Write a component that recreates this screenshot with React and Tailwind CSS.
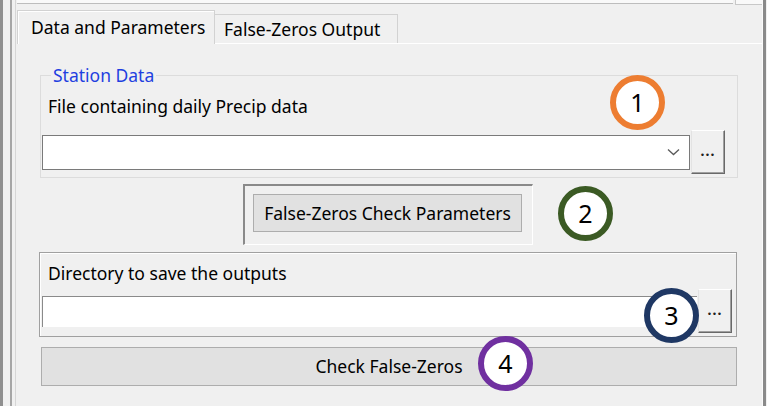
import React from "react";

// "..." browse button, classic raised 3D look
const DotsButton = () => (
  <div className="w-[34px] h-[44px] shrink-0 flex items-center justify-center bg-[#f0f0f0] border border-t-white border-l-[#e3e3e3] border-r-[#696969] border-b-[#696969] shadow-[inset_-1px_-1px_0_#a0a0a0]">
    <span className="text-[14px] leading-none font-bold text-[#202020] -mt-[2px] tracking-[1px]">...</span>
  </div>
);

// numbered callout rings drawn over the form
const Badge = ({ n, className }) => (
  <div className={"absolute w-[55px] h-[55px] rounded-full border-[6px] bg-white flex items-center justify-center " + className}>
    <span className="text-[25px] leading-none text-black">{n}</span>
  </div>
);

const App = () => {
  return (
    <div className="relative w-[767px] h-[406px] overflow-hidden flex bg-[#f0f0f0] text-black font-['Noto_Sans',sans-serif] text-[17.5px] leading-[22px]">
      {/* left window edges */}
      <div className="w-[17px] shrink-0 flex">
        <div className="w-[3px] bg-[#8f8f8f]"></div>
        <div className="w-[7px]"></div>
        <div className="w-[2px] bg-[#a6a6a6]"></div>
        <div className="w-[3px]"></div>
        <div className="w-[1px] bg-[#d6d6d6]"></div>
      </div>

      <div className="w-[745px] shrink-0 flex flex-col">
        {/* bottom of control above */}
        <div className="h-[5px] flex">
          <div className="w-[716px] h-[4px] bg-[#f9f9f9] border-b border-[#bdbdbd]"></div>
          <div className="w-[2px]"></div>
          <div className="flex-1 h-[5px] bg-[#f9f9f9] border-b border-l border-[#c8c8c8]"></div>
        </div>

        {/* tabs */}
        <div className="h-[38px] flex items-end">
          <div className="relative z-10 -mb-px w-[198px] h-[34px] pl-[13px] flex items-center bg-[#f0f0f0] border-t border-l border-r border-[#d2d2d2] shadow-[inset_1px_1px_0_#fff]">
            <span className="-mt-[2px]">Data and Parameters</span>
          </div>
          <div className="w-[183px] h-[29px] pl-[9px] flex items-center bg-[#f0f0f0] border-t border-r border-[#d2d2d2]">
            <span>False-Zeros Output</span>
          </div>
        </div>

        {/* tab page */}
        <div className="flex-1 flex flex-col border-t border-white">
          {/* Station Data group */}
          <div className="relative mt-[31px] ml-[23px] w-[698px] h-[103px] border border-[#dcdcdc] flex flex-col">
            <span className="absolute -top-[12px] left-[10px] px-[2px] bg-[#f0f0f0] text-[#1f3fe0]">Station Data</span>
            <span className="mt-[19px] ml-[7px]">File containing daily Precip data</span>
            <div className="mt-[13px] flex items-center">
              <div className="ml-[1px] w-[648px] h-[35px] bg-white border border-[#7a7a7a] flex items-center justify-end pr-[9px]">
                <svg width="13" height="8" viewBox="0 0 13 8">
                  <path d="M1 1.5 L6.5 6.5 L12 1.5" fill="none" stroke="#5a5a5a" strokeWidth="1.3" />
                </svg>
              </div>
              <div className="ml-[1px]">
                <DotsButton />
              </div>
            </div>
          </div>

          {/* parameters button in sunken frame */}
          <div className="mt-[6px] ml-[226px] w-[290px] h-[61px] border-t-2 border-l-2 border-t-[#8a8a8a] border-l-[#8a8a8a] border-b border-r border-b-white border-r-white pt-[8px] pl-[8px]">
            <div className="w-[269px] h-[38px] bg-[#e1e1e1] border border-[#adadad] flex items-center justify-center">
              <span className="-mt-[1px]">False-Zeros Check Parameters</span>
            </div>
          </div>

          {/* output directory */}
          <div className="mt-[7px] ml-[22px] w-[698px] h-[85px] border border-[#a0a0a0] shadow-[inset_1px_1px_0_#fff] flex flex-col">
            <span className="mt-[9px] ml-[8px]">Directory to save the outputs</span>
            <div className="mt-[5px] flex items-center">
              <div className="ml-[2px] w-[655px] h-[31px] bg-white border-t border-l border-[#8a8a8a]"></div>
              <div className="ml-[1px]">
                <DotsButton />
              </div>
            </div>
          </div>

          <div className="mt-[10px] ml-[24px] w-[696px] h-[39px] bg-[#e1e1e1] border border-[#adadad] flex items-center justify-center">
            <span className="-mt-[1px]">Check False-Zeros</span>
          </div>
        </div>
      </div>

      {/* right window edge */}
      <div className="w-[5px] shrink-0 flex">
        <div className="w-[1px] bg-[#fafafa]"></div>
        <div className="w-[3px] bg-[#8a8a8a]"></div>
      </div>

      <Badge n="1" className="left-[610px] top-[75px] border-[#ed7d31]" />
      <Badge n="2" className="left-[558px] top-[186px] border-[#3b5a24]" />
      <Badge n="3" className="left-[644px] top-[288px] border-[#1f3864]" />
      <Badge n="4" className="left-[478px] top-[336px] border-[#7030a0]" />
    </div>
  );
};

export default App;
